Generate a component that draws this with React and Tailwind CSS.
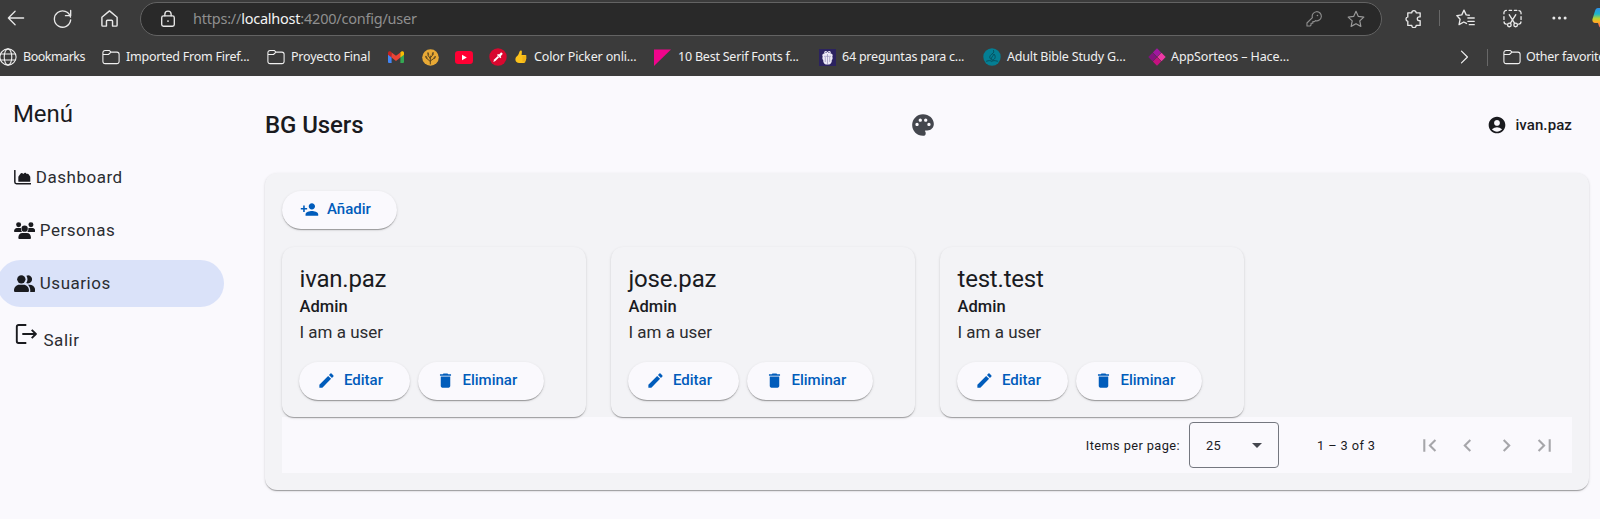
import { useState } from 'react'
import { MdPersonAdd, MdEdit, MdDelete, MdPalette, MdAccountCircle, MdFirstPage, MdChevronLeft, MdChevronRight, MdLastPage, MdArrowDropDown } from 'react-icons/md'

const elevation = 'shadow-[0_2px_1px_-1px_rgba(0,0,0,0.2),0_1px_1px_0_rgba(0,0,0,0.14),0_1px_3px_0_rgba(0,0,0,0.12)]'

function Icon({ className = '', size = 18, viewBox = '0 0 20 20', width = 1.3, children }) {
  return (
    <svg className={`shrink-0 ${className}`} width={size} height={size} viewBox={viewBox} fill="none" stroke="currentColor" strokeWidth={width} strokeLinecap="round" strokeLinejoin="round">
      {children}
    </svg>
  )
}

const Folder = () => (
  <Icon width={1.2}>
    <path d="M1 5.2V15a2.4 2.4 0 0 0 2.4 2.4h13.2A2.4 2.4 0 0 0 19 15V7a2.4 2.4 0 0 0-2.4-2.4H10L8 2.7H3.4A2.4 2.4 0 0 0 1 5.2ZM1 7.2h6.2L10 4.6" />
  </Icon>
)

const Globe = () => (
  <Icon width={1.2}>
    <circle cx="10" cy="10" r="9" />
    <ellipse cx="10" cy="10" rx="4.2" ry="9" />
    <path d="M2 6.7h16M2 13.3h16" />
  </Icon>
)

const Gmail = () => (
  <svg width="16" height="12" viewBox="0 0 16 12">
    <path d="M0 2v9a1 1 0 0 0 1 1h2.6V4.6Z" fill="#4285f4" />
    <path d="M16 2v9a1 1 0 0 1-1 1h-2.6V4.6Z" fill="#34a853" />
    <path d="M0 1.8v2l3.6 2.8V1.5L2.6.6C1.5-.2 0 .5 0 1.8Z" fill="#c5221f" />
    <path d="M3.6 1.5 8 4.8l4.4-3.3v5.1L8 9.9 3.6 6.6Z" fill="#ea4335" />
    <path d="M16 1.8v2l-3.6 2.8V1.5l1-.9C14.5-.2 16 .5 16 1.8Z" fill="#fbbc04" />
  </svg>
)

const Sprout = () => (
  <svg width="17" height="17" viewBox="0 0 17 17">
    <circle cx="8.5" cy="8.5" r="8.3" fill="#e8a935" />
    <path d="M8.3 15V7M8.3 12.5 4.3 9M8.3 12l4.2-3M8.3 9.5 6 6.5M8.3 9 11 5.5" stroke="#5d4720" strokeWidth="1" fill="none" strokeLinecap="round" />
    <g fill="#6a5024">
      <ellipse cx="4.3" cy="8.3" rx=".9" ry="1.7" transform="rotate(-35 4.3 8.3)" />
      <ellipse cx="12.7" cy="8.5" rx=".9" ry="1.7" transform="rotate(35 12.7 8.5)" />
      <ellipse cx="6.2" cy="5" rx=".9" ry="1.7" transform="rotate(-15 6.2 5)" />
      <ellipse cx="10.8" cy="4.7" rx=".9" ry="1.7" transform="rotate(20 10.8 4.7)" />
    </g>
  </svg>
)

const YouTube = () => (
  <svg width="18" height="13" viewBox="0 0 18 13">
    <rect width="18" height="13" rx="3.2" fill="#ff0033" />
    <path d="M7 3.7v5.6l4.8-2.8Z" fill="#fff" />
  </svg>
)

const Picker = () => (
  <svg width="18" height="18" viewBox="0 0 18 18">
    <circle cx="9" cy="9" r="8.7" fill="#d8082f" />
    <path d="m4.3 13.9.8-2.3 3.7-3.7 1.3 1.3-3.7 3.7Z" fill="#fff" />
    <path d="m8 7 1-1 1 .6 1.5-1.7c1-1 2.8.6 1.8 1.7l-1.6 1.6.6 1-1 1Z" fill="#fff" />
  </svg>
)

const Thumb = () => (
  <svg width="12" height="14" viewBox="0 0 12 14">
    <path d="M4.7 1.2C5.500.1 7 .6 6.900 2L6.600 5h3.700c1.300 0 1.500 1.500.7 2 .8.500.6 1.700-.1 2 .5.700.2 1.700-.5 1.900.2 1-.5 2-1.700 2H4.300C2 12.900.4 11.500.4 9.400.4 7.400 1.700 6.500 2.700 5.500 3.800 4.400 4 2.500 4.700 1.200Z" fill="#fcc21b" />
    <path d="M7.500 7h3.300M7.500 9h3.200M7.500 10.900h2.700" stroke="#d98d10" strokeWidth=".6" />
  </svg>
)

const PinkTriangle = () => (
  <svg width="17" height="17" viewBox="0 0 17 17"><path d="M0 .5h17L0 17Z" fill="#f0048c" /></svg>
)

const Gift = () => (
  <svg width="17" height="17" viewBox="0 0 17 17">
    <rect width="17" height="17" fill="#2b2260" />
    <path d="M5.500 4.500C4.300 2.300 7 1 8.500 3 10 1 12.700 2.300 11.500 4.500c2 .2 2.700 1.700 1.800 3.200.7 1.500.2 2.500-.5 3.300.2 2.500-1.200 4-2.600 4.500H6.800C5.400 15 4 13.500 4.200 11c-.7-.8-1.200-1.800-.5-3.300-.9-1.500-.2-3 1.800-3.200Z" fill="#ece9f6" />
    <path d="M8.500 5v10M6.300 8v5M10.700 8v5M5 7.300h7" stroke="#8b84b3" strokeWidth=".6" />
    <path d="M6.500 3.500h1.200M9.300 3.500h1.200" stroke="#4a4080" strokeWidth=".9" />
  </svg>
)

const Flame = () => (
  <svg width="18" height="18" viewBox="0 0 18 18">
    <circle cx="9" cy="9" r="8.700" fill="#047e93" />
    <path d="M3.500 13.200c2.500-.8 4.300-.8 5.300.3 1-1.100 3-1.100 5.700-.3M9 12C5.500 10.500 6.500 7.500 9 6c2-1.300 2-2.300 1.500-3.500M9.500 12c3.500-1 3-3.500 2-5.500M8.300 10.500c0-1.500 2-2 2.200-4" fill="none" stroke="#05505f" strokeWidth="1" strokeLinecap="round" />
  </svg>
)

const Diamonds = () => (
  <svg width="18" height="18" viewBox="0 0 18 18">
    <path d="m9 .3 4.200 4.200L9 8.700 4.800 4.500Z" fill="#a0179f" />
    <path d="m4.500 4.800 4.200 4.200-4.200 4.200L.3 9Z" fill="#84137f" />
    <path d="m13.500 4.800 4.200 4.200-4.200 4.200L9.300 9Z" fill="#ee39a5" />
    <path d="m9 9.300 4.200 4.200L9 17.700l-4.200-4.200Z" fill="#c4117f" />
  </svg>
)

const bookmarks = [
  { icon: <Globe />, label: 'Bookmarks', item: 'w-[103px] gap-[6px]', text: 'tracking-[-0.5px]' },
  { icon: <Folder />, label: 'Imported From Firef...', item: 'w-[165px] gap-[6px]', text: 'tracking-[-0.23px]' },
  { icon: <Folder />, label: 'Proyecto Final', item: 'w-[121px] gap-[6px]', text: 'tracking-[-0.22px]' },
  { icon: <Gmail />, item: 'w-[34px]' },
  { icon: <Sprout />, item: 'w-[33px]' },
  { icon: <YouTube />, item: 'w-[34px]' },
  { icon: <><Picker /><Thumb /></>, label: 'Color Picker onli...', item: 'w-[165px] gap-[7.5px]', text: 'tracking-[-0.15px]' },
  { icon: <PinkTriangle />, label: '10 Best Serif Fonts f...', item: 'w-[165px] gap-[7px]', text: 'tracking-[-0.22px]' },
  { icon: <Gift />, label: '64 preguntas para c...', item: 'w-[164px] gap-[6px]', text: 'tracking-[-0.22px]' },
  { icon: <Flame />, label: 'Adult Bible Study G...', item: 'w-[165px] gap-[6px]', text: 'tracking-[-0.18px]' },
  { icon: <Diamonds />, label: 'AppSorteos – Hace...', item: 'w-[310px] gap-[5px]', text: 'tracking-[-0.1px]' },
]

function Browser() {
  return (
    <header className="h-[76px] shrink-0 overflow-hidden bg-[#3b3b3b] font-['Noto_Sans',sans-serif] text-[#e8e8e8]">
      <div className="flex h-[38px] items-center pb-[2px] pl-[7px]">
        <Icon className="mr-[28px]" size={18} width={1.4}><path d="M18.5 10H1.5M9 2.5 1.5 10 9 17.5" /></Icon>
        <Icon className="mr-[28px]" size={19} width={1.4}><path d="M18.4 8.5a8.6 8.6 0 1 0 .2 3M18.6 1.5V7h-5.5" /></Icon>
        <Icon className="mr-[21px]" size={19} width={1.5}><path d="M2 8.7 10 2l8 6.700V17a1 1 0 0 1-1 1h-3.800v-5.200a1 1 0 0 0-1-1H7.800a1 1 0 0 0-1 1V18H3a1 1 0 0 1-1-1Z" /></Icon>
        <div className="mt-[1px] flex h-[34px] w-[1242px] shrink-0 items-center rounded-full border border-[#636363] bg-[#292929] pl-[18px] pr-[16px]">
          <Icon size={18} width={1.5}>
            <rect x="3" y="6.5" width="14" height="11.5" rx="2" />
            <path d="M6.5 6.5V4.8a3.5 3.5 0 0 1 7 0v1.7" />
            <circle cx="10" cy="12.3" r="1" fill="currentColor" stroke="none" />
          </Icon>
          <p className="ml-[16px] text-[14.5px] tracking-[-0.23px] text-[#8f8f8f]">https://<span className="text-[#f4f4f4]">localhost</span>:4200/config/user</p>
          <Icon className="ml-auto mr-[25px] text-[#8d8d8d]" size={16} width={1.4}>
            <path d="M8 8.2a5.7 5.7 0 1 1 3.8 3.8l-1.3 1.3H8.5v2H6.3v2.2L5 18.8H1.2V15Z" />
            <circle cx="14.3" cy="5.7" r="1" fill="currentColor" stroke="none" />
          </Icon>
          <Icon className="text-[#9a9a9a]" size={18}><path d="m10 1.5 2.6 5.6 6.1.8-4.5 4.2 1.2 6.1L10 15.2l-5.400 3 1.200-6.100L1.300 7.900l6.100-.8Z" /></Icon>
        </div>
        <div className="flex items-center pl-[22px]">
          <Icon size={19} width={1.4}><path d="M4 4h4.2a2.3 2.3 0 1 1 4.6 0H17v4.3h-1a1.9 1.9 0 1 0 0 4h1v5h-4.2a2.3 2.3 0 0 1-4.6 0H4V13a2.4 2.4 0 0 1 0-4.7Z" /></Icon>
          <span className="ml-[16px] mr-[16px] h-[16px] w-px bg-[#686868]" />
          <Icon size={19} width={1.4}><path d="M11 15.2 8.2 13.7l-5 2.8 1.1-5.7L.9 6.9l5.2-.7 2.3-5 2.3 5 3.3.4M12.5 9.5h6.7M12.5 13h6.7M14 16.5h5.2" /></Icon>
          <Icon className="ml-[28px]" size={19} width={1.4}>
            <path d="M1 5V4a2.5 2.5 0 0 1 2.5-2.5M6.5 1.5h2.5M12 1.5h2.5M16.8 1.7A2.5 2.5 0 0 1 19 4v1M19 8v3M1 8v3M1.1 13.5A2.5 2.5 0 0 0 3.500 16M18.900 13.500A2.500 2.500 0 0 1 16.500 16M6.500 6l5.800 9.200M13.500 6l-5.800 9.200" />
            <circle cx="6.7" cy="16.8" r="1.9" /><circle cx="13.3" cy="16.8" r="1.9" />
          </Icon>
          <svg className="ml-[30px] shrink-0" width="15" height="4" viewBox="0 0 15 4" fill="currentColor"><circle cx="1.9" cy="2" r="1.5" /><circle cx="7.5" cy="2" r="1.5" /><circle cx="13.1" cy="2" r="1.5" /></svg>
          <svg className="ml-[25px] shrink-0" width="24" height="22" viewBox="0 0 24 22">
            <defs><linearGradient id="copilot" x1="0" y1="0" x2="0" y2="1"><stop offset="0" stopColor="#2f8fe8" /><stop offset=".3" stopColor="#1cb5c9" /><stop offset=".52" stopColor="#b5d334" /><stop offset=".68" stopColor="#ffb01f" /><stop offset="1" stopColor="#f2506e" /></linearGradient></defs>
            <path d="M6 1h12c2 0 2.500 2 3 4l2 8c.5 2-1 4-3 4h-3l-1 4H10c-3 0-3-2-4-5H3c-2 0-3-2-2.500-4L3 4c.5-2 1.500-3 3-3Z" fill="url(#copilot)" />
          </svg>
        </div>
      </div>
      <nav className="-ml-px flex h-[38px] items-center whitespace-nowrap text-[12.5px] text-[#f0f0f0]">
        {bookmarks.map((b, i) => (
          <div key={i} className={`flex shrink-0 items-center ${b.item}`}>
            {b.icon}
            {b.label && <span className={`pt-px ${b.text}`}>{b.label}</span>}
          </div>
        ))}
        <Icon className="shrink-0" size={14} width={1.7}><path d="m5 1.5 8.500 8.500L5 18.500" /></Icon>
        <span className="ml-[15px] mr-[15px] h-[17px] w-px shrink-0 bg-[#686868]" />
        <Folder />
        <span className="ml-[5px] pt-px tracking-[-0.25px]">Other favorites</span>
      </nav>
    </header>
  )
}

const AreaChart = () => (
  <svg className="shrink-0" width="17.3" height="15" viewBox="0 0 52 45">
    <path d="M2.500 1.500V36a5 5 0 0 0 5 5H50" fill="none" stroke="currentColor" strokeWidth="4.500" strokeLinecap="round" />
    <path d="M13 34V22c0-2 .5-3 2-5l5-6.500c1.500-2 4-2 5.500-.5l2 2 4-3c1.500-1 3-1 4 0l3 3.200 2-1c1-.5 2.500 0 3.300 1.300L48 19c.7 1 1 2 1 4v11a1.500 1.500 0 0 1-1.500 1.500h-33A1.500 1.500 0 0 1 13 34Z" fill="currentColor" />
  </svg>
)

const People = () => (
  <svg className="shrink-0" width="21.300" height="17.300" viewBox="0 0 64 52" fill="currentColor">
    <circle cx="14" cy="8.500" r="7.500" />
    <circle cx="51" cy="8.500" r="7.500" />
    <circle cx="32" cy="20" r="9.500" />
    <path d="M9 18h9c1.300 0 2.300.3 3.200.8-.8 4.500.5 8.500 3 11.200H2.500C1 30 0 29 0 27.500 0 22 4 18 9 18ZM46 18h9c5 0 9 4 9 9.500 0 1.500-1 2.500-2.500 2.500H40c2.500-2.700 3.800-6.700 3-11.200.8-.5 1.800-.8 3-.8ZM25 33h14c7 0 12 6 12 14 0 2.500-1.500 4-3.500 4h-31c-2 0-3.500-1.500-3.500-4 0-8 5-14 12-14Z" />
  </svg>
)

const Pair = () => (
  <svg className="shrink-0" width="21.300" height="17.300" viewBox="0 0 64 52" fill="currentColor">
    <circle cx="22" cy="13" r="12.500" />
    <path d="M36.500 24.300c5-5.800 5.300-15.600.8-22C39 1 41 .5 43 .5a12.500 12.500 0 1 1-6.500 23.800ZM16 29.500h12.500C38 29.500 45 37 45 47c0 2.500-1.500 4.500-4 4.500H4c-2.500 0-4-2-4-4.500 0-10 7-17.500 16-17.500ZM41.500 29.500H47c9.500 0 17 7.500 17 17.500 0 2.500-1.500 4.500-4 4.500H48.200c.6-1.300.8-2.800.8-4.500 0-7.500-3-13.500-7.500-17.500Z" />
  </svg>
)

const Exit = () => (
  <svg className="mb-[13px] shrink-0" width="23" height="22" viewBox="0 0 23 22" fill="none" stroke="currentColor" strokeWidth="1.900" strokeLinejoin="round">
    <path d="M12.300 2H4.500A1.700 1.700 0 0 0 2.800 3.700v14.600A1.700 1.700 0 0 0 4.500 20h7.800M8.300 11h13.500M17.700 6.800l4.200 4.200-4.200 4.200" />
  </svg>
)

const menu = [
  { label: 'Dashboard', icon: <AreaChart />, gap: 'gap-[5px]' },
  { label: 'Personas', icon: <People />, gap: 'gap-[5px]' },
  { label: 'Usuarios', icon: <Pair />, gap: 'gap-[5px]' },
  { label: 'Salir', icon: <Exit />, gap: 'gap-[7px] pt-[7px]' },
]

function Sidebar() {
  const [active, setActive] = useState('Usuarios')
  return (
    <aside className="w-[265px] shrink-0 pt-[22px]">
      <h2 className="pl-[13px] text-[24px] leading-8 tracking-[-0.1px]">Menú</h2>
      <ul className="mt-[24px] flex flex-col gap-[6px]">
        {menu.map((m) => (
          <li key={m.label}>
            <button
              onClick={() => setActive(m.label)}
              className={`-ml-[3px] flex h-[47px] w-[227px] items-center rounded-full pl-[16.5px] text-[17px] tracking-[0.52px] ${m.gap} ${active === m.label ? 'bg-[#dae2f9]' : ''}`}
            >
              {m.icon}
              <span className="pt-px text-[#2b2d31]">{m.label}</span>
            </button>
          </li>
        ))}
      </ul>
    </aside>
  )
}

function Button({ icon: Glyph, className, children }) {
  return (
    <button className={`flex h-[38px] items-center gap-[8px] rounded-full bg-[#faf9fd] pb-px pl-[18px] text-[15px] font-medium text-[#005cbb] ${elevation} ${className}`}>
      <Glyph className="h-[19px] w-[19px] shrink-0" />
      {children}
    </button>
  )
}

function UserCard({ name }) {
  return (
    <article className={`h-[170px] w-[303.5px] rounded-xl bg-[#f3f3f6] px-[17px] pt-[17px] ${elevation}`}>
      <h3 className="pl-[0.5px] text-[24px] leading-[30px] tracking-[-0.2px]">{name}</h3>
      <p className="pl-[0.5px] text-[16.5px] font-medium leading-[25px] tracking-[0.05px]">Admin</p>
      <p className="pl-[0.5px] text-[17px] leading-[27px] text-[#2c2c2f]">I am a user</p>
      <div className="mt-[16px] flex gap-[8px]">
        <Button icon={MdEdit} className="w-[110.5px]">Editar</Button>
        <Button icon={MdDelete} className="w-[126px]">Eliminar</Button>
      </div>
    </article>
  )
}

function Paginator() {
  return (
    <footer className="flex h-[56px] items-center justify-end bg-[#faf9fd] pr-[8px] text-[12.8px] tracking-[0.4px]">
      <span className="pt-px">Items per page:</span>
      <button className="ml-[9px] flex h-[46px] w-[90px] items-center justify-between rounded-[4px] border border-[#74777f] pl-[16px] pr-[9px]">
        <span className="pt-px">25</span>
        <MdArrowDropDown className="h-[24px] w-[24px] text-[#44474e]" />
      </button>
      <span className="ml-[38px] w-[93px] pt-px">1 – 3 of 3</span>
      {[MdFirstPage, MdChevronLeft, MdChevronRight, MdLastPage].map((Glyph, i) => (
        <button key={i} className="flex w-[38.5px] justify-center text-[#a6a6aa]"><Glyph className="h-[25px] w-[25px]" /></button>
      ))}
    </footer>
  )
}

export default function App() {
  return (
    <div className="flex h-[519px] w-[1600px] flex-col overflow-hidden bg-[#faf9fd] font-[Roboto,sans-serif] text-[#1a1b1f]">
      <Browser />
      <div className="flex flex-1">
        <Sidebar />
        <main className="w-[1324px]">
          <div className="flex h-[97px] items-center">
            <h1 className="w-[645px] pt-px text-[24px] font-medium tracking-[-0.1px]">BG Users</h1>
            <MdPalette className="h-[26px] w-[26px] text-[#44474e]" />
            <div className="ml-auto flex items-center gap-[8px] pr-[17px] text-[15px] font-medium tracking-[0.1px]">
              <MdAccountCircle className="h-[20px] w-[20px]" />
              <span className="pt-[2px]">ivan.paz</span>
            </div>
          </div>
          <section className={`h-[317px] rounded-xl bg-[#f3f3f6] px-[17px] pt-[18px] ${elevation}`}>
            <Button icon={MdPersonAdd} className="w-[115px]">Añadir</Button>
            <div className="relative mt-[18px] flex gap-[25.5px]">
              <UserCard name="ivan.paz" />
              <UserCard name="jose.paz" />
              <UserCard name="test.test" />
            </div>
            <Paginator />
          </section>
        </main>
      </div>
    </div>
  )
}
